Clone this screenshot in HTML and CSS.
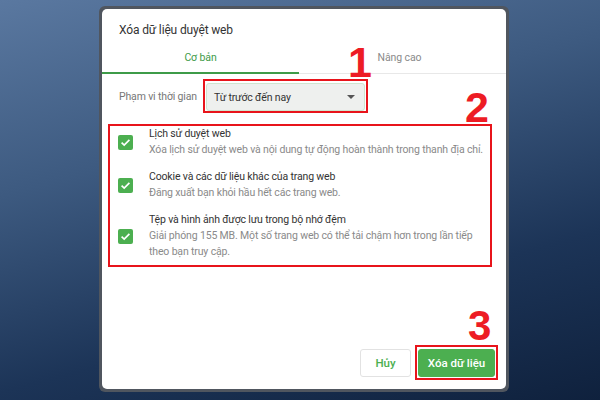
FILE: index.html
```html
<!DOCTYPE html>
<html lang="vi">
<head>
<meta charset="utf-8">
<title>Xóa dữ liệu duyệt web</title>
<link rel="stylesheet" href="styles.css">
</head>
<body>
<div class="screen">
  <div class="frame">
    <div class="dialog">
      <div class="title">Xóa dữ liệu duyệt web</div>
      <div class="tabs">
        <div class="tab active">Cơ bản</div>
        <div class="tab">Nâng cao</div>
      </div>
      <div class="range">
        <span class="range-label">Phạm vi thời gian</span>
        <div class="mark mark-select">
          <div class="select">
            <span>Từ trước đến nay</span>
            <span class="arrow"></span>
          </div>
        </div>
      </div>
      <div class="mark mark-list">
        <div class="item">
          <span class="check"><svg viewBox="0 0 15 15" width="15" height="15"><path d="M3.6 7.6 L6.2 10.1 L11.4 4.9" fill="none" stroke="#fff" stroke-width="1.7"/></svg></span>
          <div class="item-text">
            <div class="item-title">Lịch sử duyệt web</div>
            <div class="item-desc">Xóa lịch sử duyệt web và nội dung tự động hoàn thành trong thanh địa chỉ.</div>
          </div>
        </div>
        <div class="item">
          <span class="check"><svg viewBox="0 0 15 15" width="15" height="15"><path d="M3.6 7.6 L6.2 10.1 L11.4 4.9" fill="none" stroke="#fff" stroke-width="1.7"/></svg></span>
          <div class="item-text">
            <div class="item-title">Cookie và các dữ liệu khác của trang web</div>
            <div class="item-desc">Đăng xuất bạn khỏi hầu hết các trang web.</div>
          </div>
        </div>
        <div class="item">
          <span class="check"><svg viewBox="0 0 15 15" width="15" height="15"><path d="M3.6 7.6 L6.2 10.1 L11.4 4.9" fill="none" stroke="#fff" stroke-width="1.7"/></svg></span>
          <div class="item-text">
            <div class="item-title">Tệp và hình ảnh được lưu trong bộ nhớ đệm</div>
            <div class="item-desc">Giải phóng 155 MB. Một số trang web có thể tải chậm hơn trong lần tiếp<br>theo bạn truy cập.</div>
          </div>
        </div>
      </div>
      <div class="footer">
        <button class="btn btn-cancel">Hủy</button>
        <div class="mark mark-btn">
          <button class="btn btn-primary">Xóa dữ liệu</button>
        </div>
      </div>
    </div>
  </div>
  <span class="num num1">1</span>
  <span class="num num2">2</span>
  <span class="num num3">3</span>
</div>
</body>
</html>
```
FILE: styles.css
```css
* { box-sizing: border-box; }
html, body { margin: 0; padding: 0; }
body { font-family: Roboto, "Liberation Sans", Arial, sans-serif; }

.screen {
  position: relative;
  width: 600px;
  height: 400px;
  overflow: hidden;
  padding: 6px 0 0 99px;
  background: linear-gradient(165deg, #5a78a0 0%, #3d5a80 35%, #1c3457 70%, #0f213d 100%);
}

.frame {
  width: 410px;
  height: 386px;
  padding: 3px;
  background: #50565f;
  border-radius: 6px;
}

.dialog {
  height: 100%;
  background: #fff;
  border-radius: 5px;
  display: flex;
  flex-direction: column;
}

.title {
  padding: 13px 0 0 17px;
  font-size: 12px;
  letter-spacing: -0.15px;
  line-height: 16px;
  color: #333;
}

.tabs {
  margin-top: 6px;
  display: flex;
  border-bottom: 1px solid #e8e8e8;
}
.tab {
  flex: 0 0 201px;
  text-align: center;
  font-size: 10.5px;
  letter-spacing: -0.1px;
  line-height: 16px;
  padding: 6px 0 7px;
  color: #8a8a8a;
}
.tab.active {
  flex-basis: 197px;
  color: #3e9b48;
  padding-bottom: 6px;
  border-bottom: 2px solid #3e9b48;
  margin-bottom: -1px;
}

.range {
  margin-top: 5px;
  padding-left: 17px;
  display: flex;
  align-items: center;
}
.range-label {
  font-size: 10.5px;
  letter-spacing: -0.15px;
  color: #777;
  width: 84px;
  white-space: nowrap;
}

.mark { border: 2px solid #e8141b; }
.mark-select { padding: 2px 1px 0; }
.select {
  width: 159px;
  height: 28px;
  border: 1px solid #cfe5cf;
  background: #eef0ee;
  border-radius: 3px;
  display: flex;
  align-items: center;
  justify-content: space-between;
  padding: 0 9px 0 7px;
  font-size: 10.5px;
  letter-spacing: -0.15px;
  color: #333;
}
.arrow {
  width: 0;
  height: 0;
  border-left: 4px solid transparent;
  border-right: 4px solid transparent;
  border-top: 4px solid #555;
}

.mark-list {
  margin: 11px 14px 0 6px;
  padding: 0 0 5px 8px;
  display: flex;
  flex-direction: column;
  gap: 11px;
}
.item {
  display: flex;
  align-items: center;
  gap: 16px;
}
.check {
  flex: 0 0 15px;
  width: 15px;
  height: 15px;
  background: #4caf50;
  border-radius: 2px;
  display: flex;
}
.item-text {
  font-size: 10.5px;
  letter-spacing: -0.15px;
  line-height: 16px;
  white-space: nowrap;
}
.item-title { color: #333; }
.item-desc { color: #8a8a8a; }

.footer {
  margin-top: auto;
  padding: 0 8px 9px 0;
  display: flex;
  justify-content: flex-end;
  align-items: center;
  gap: 4px;
}
.mark-btn { padding: 2px 1px 1px; }
.btn {
  height: 28px;
  border-radius: 3px;
  font-family: Roboto, "Liberation Sans", Arial, sans-serif;
  font-size: 11.5px;
  font-weight: 500;
  padding: 0;
  cursor: pointer;
}
.btn-cancel {
  width: 51px;
  background: #fff;
  border: 1px solid #e2e2e2;
  color: #4caf50;
}
.btn-primary {
  display: block;
  width: 77px;
  background: #4caf50;
  border: 1px solid #4caf50;
  color: #fff;
}

.num {
  position: absolute;
  font-family: "Liberation Sans", Arial, sans-serif;
  font-weight: bold;
  font-size: 43px;
  line-height: 43px;
  color: #ed1c24;
}
.num1 { left: 348px; top: 41px; }
.num2 { left: 465px; top: 86px; }
.num3 { left: 468px; top: 304px; font-size: 42px; }
```
